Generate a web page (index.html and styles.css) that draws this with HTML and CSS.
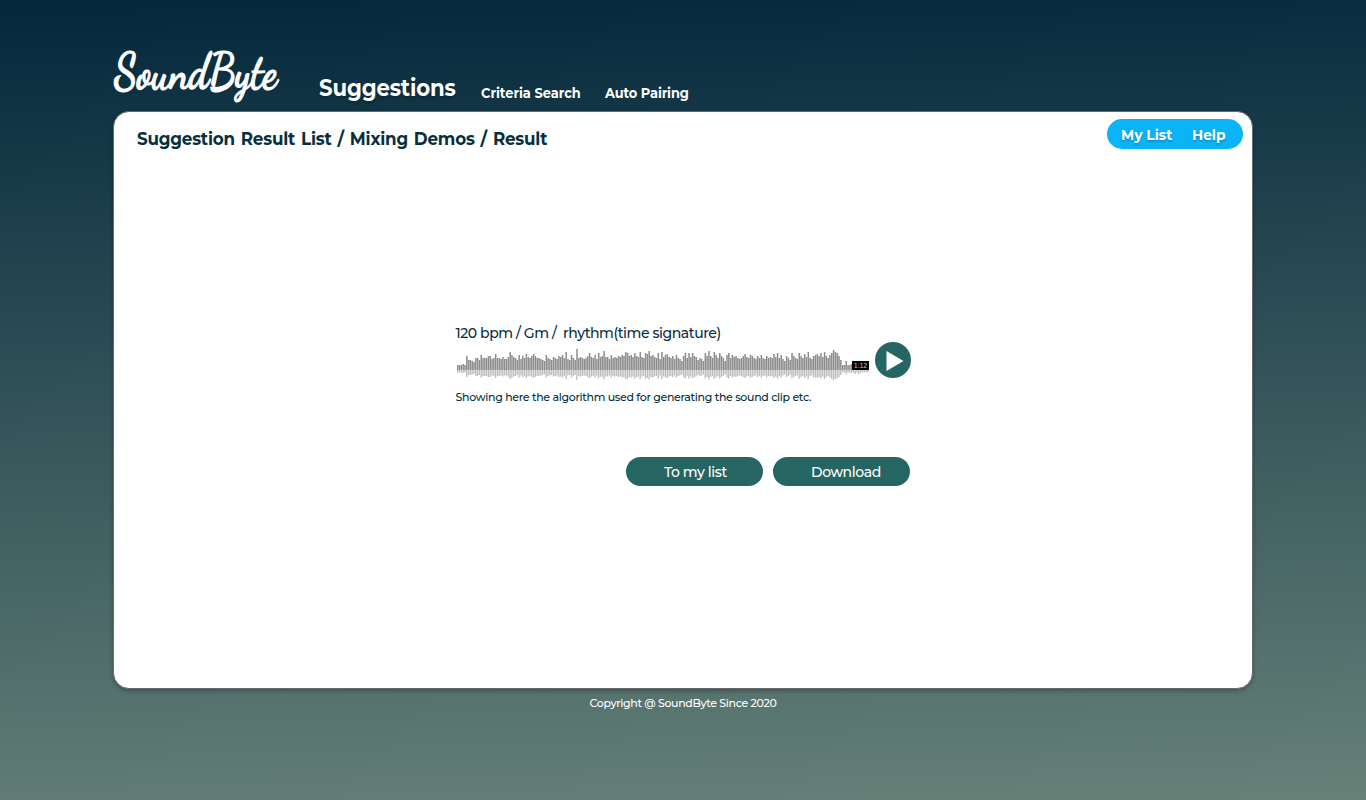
FILE: index.html
```html
<!DOCTYPE html>
<html lang="en">
<head>
<meta charset="utf-8">
<title>SoundByte</title>
<link rel="stylesheet" href="styles.css">
</head>
<body>
<div class="page">
  <header class="header">
    <svg class="logo" viewBox="0 0 170 60" role="img" aria-label="SoundByte"><text class="logo-text" x="1" y="35.500" transform="scale(1 1.25)" textLength="163" lengthAdjust="spacingAndGlyphs">SoundByte</text></svg>
    <nav class="nav">
      <a class="nav-active">Suggestions</a>
      <a class="nav-link criteria">Criteria Search</a>
      <a class="nav-link pairing">Auto Pairing</a>
    </nav>
  </header>
  <main class="panel">
    <div class="panel-top">
      <h1 class="crumbs">Suggestion Result List / Mixing Demos / Result</h1>
      <div class="pill"><a class="my-list">My List</a><a class="help">Help</a></div>
    </div>
    <section class="track">
      <div class="info">120 bpm / Gm /&nbsp; rhythm(time signature)</div>
      <div class="player">
        <svg class="wave" id="wave" viewBox="0 0 412 36"></svg>
        <svg class="play" viewBox="0 0 36 36"><circle cx="18" cy="18" r="18" fill="#256562"/><path d="M11.500 9v20l17-10z" fill="#fff"/></svg>
      </div>
      <div class="note">Showing here the algorithm used for generating the sound clip etc.</div>
      <div class="actions"><button class="button"><span class="to-list">To my list</span></button><button class="button"><span class="download">Download</span></button></div>
    </section>
  </main>
  <footer class="footer"><span class="copyright">Copyright @ SoundByte Since 2020</span></footer>
</div>
<script src="wave.js"></script>
</body>
</html>
```
FILE: styles.css
```css
* { box-sizing: border-box; }
body { margin: 0; font-family: Montserrat, Inter, sans-serif; font-weight: 500; color: #06303e; }
.page { height: 800px; padding: 44px 113px 0; background: linear-gradient(178deg, #03283c 0%, #668178 100%); overflow: hidden; }
.header { height: 67px; display: flex; }
.logo { width: 170px; height: 60px; overflow: visible; flex: none; }
.logo-text { font: 700 41px "Dancing Script", "Liberation Serif", cursive; fill: #fff; stroke: #fff; stroke-width: .9px; }
.nav { display: flex; align-items: flex-start; padding: 29px 0 0 36px; color: #fff; font-weight: 700; white-space: nowrap; }
.nav-active { font-size: 23px; line-height: 30px; width: 162px; letter-spacing: -.15px; transform: scaleX(.925); transform-origin: left; text-shadow: 0 2px 3px #0004; }
.nav-link { font-size: 14px; line-height: 20px; padding-top: 10px; transform: scaleX(.925); transform-origin: left; }
.criteria { width: 124px; }
.pairing { letter-spacing: -.1px; }
.panel { height: 578px; background: #fff; border: 1px solid #66696b; border-radius: 16px; box-shadow: 0 2px 4px #0004; }
.panel-top { height: 212px; display: flex; justify-content: space-between; align-items: flex-start; padding: 7px 9px 0 23px; }
.crumbs { margin: 6px 0 0; font-size: 18px; line-height: 28px; letter-spacing: -.2px; word-spacing: 1.5px; white-space: nowrap; transform: scaleX(.928); transform-origin: left; }
.pill { width: 136px; height: 30px; display: flex; align-items: center; border-radius: 15px; background: #0bb4f7; padding-left: 14px; color: #fff; font-size: 15px; font-weight: 700; text-shadow: 0 2px 2px #0003; }
.my-list { width: 71px; }
.my-list, .help { transform: scaleX(.92); transform-origin: left; }
.track { width: 456px; margin-left: 341px; }
.info { height: 18px; padding-left: .5px; line-height: 18px; font-size: 14px; letter-spacing: -.43px; white-space: nowrap; }
.player { display: flex; height: 40px; padding-left: 2px; }
.wave { width: 412px; height: 36px; margin-top: 4px; flex: none; }
.wave-top { fill: #8c8c8c; }
.wave-bottom { fill: #bcbcbc; }
.time { font: 7px "DejaVu Sans", sans-serif; fill: #bbb; }
.play { width: 36px; height: 36px; margin-left: 5.5px; flex: none; }
.note { height: 16px; margin-top: 7px; padding-left: .5px; line-height: 16px; font-size: 11px; letter-spacing: -.31px; white-space: nowrap; }
.actions { display: flex; gap: 10px; margin: 52px 0 0 171.4px; }
.button { width: 137px; height: 29px; padding: 0 0 0 1px; border: 0; border-radius: 15px; background: #256562; color: #fff; font: 500 14px Montserrat, Inter, sans-serif; letter-spacing: -.4px; }
.download { padding-left: 7px; }
.footer { padding-top: 6px; line-height: 16px; color: #fff; font-size: 11px; letter-spacing: -.34px; text-align: center; }
```
FILE: wave.js
```js
const heights = [
  5,5,5,6,5,14,10,10,9,8,12,12,10,15,12,12,12,14,14,11,12,16,12,12,11,13,11,11,13,18,15,13,12,10,15,11,14,12,16,13,12,14,16,14,12,12,11,10,9,15,12,11,10,13,12,11,14,13,15,12,18,11,10,15,12,10,21,12,13,12,11,12,14,17,13,12,15,11,17,13,14,19,13,13,11,15,12,13,
  12,14,13,15,14,18,17,14,15,13,17,14,13,18,13,12,17,16,19,14,15,13,12,17,11,18,13,15,16,13,12,14,11,15,12,11,9,14,17,12,17,13,17,14,13,10,12,11,9,17,14,19,14,12,18,15,12,17,14,12,9,15,17,12,15,13,14,12,11,12,14,16,13,12,15,14,12,11,14,12,15,12,11,14,12,13,12,16,13,17,12,15,11,9,14,12,10,17,14,12,11,17,14,12,16,13,18,12,11,14,15,16,14,17,13,18,14,12,15,17,20,18,17,14,10,5,5,9,5,5,6,5,8,5,9,5,5,5,4,5
];
const pitch = 412 / heights.length;
const wave = document.getElementById("wave");
let bars = "";
heights.forEach((height, index) => {
  const x = index * pitch;
  bars += `<rect class="wave-top" x="${x}" y="${24 - height}" width="1.5" height="${height}"/>`;
  bars += `<rect class="wave-bottom" x="${x}" y="24" width="1.3" height="${Math.min(10, height / 2)}"/>`;
});
wave.innerHTML = bars + '<rect x="395" y="15" width="17" height="9"/><text class="time" x="396.500" y="22" textLength="14">1:12</text>';
```
